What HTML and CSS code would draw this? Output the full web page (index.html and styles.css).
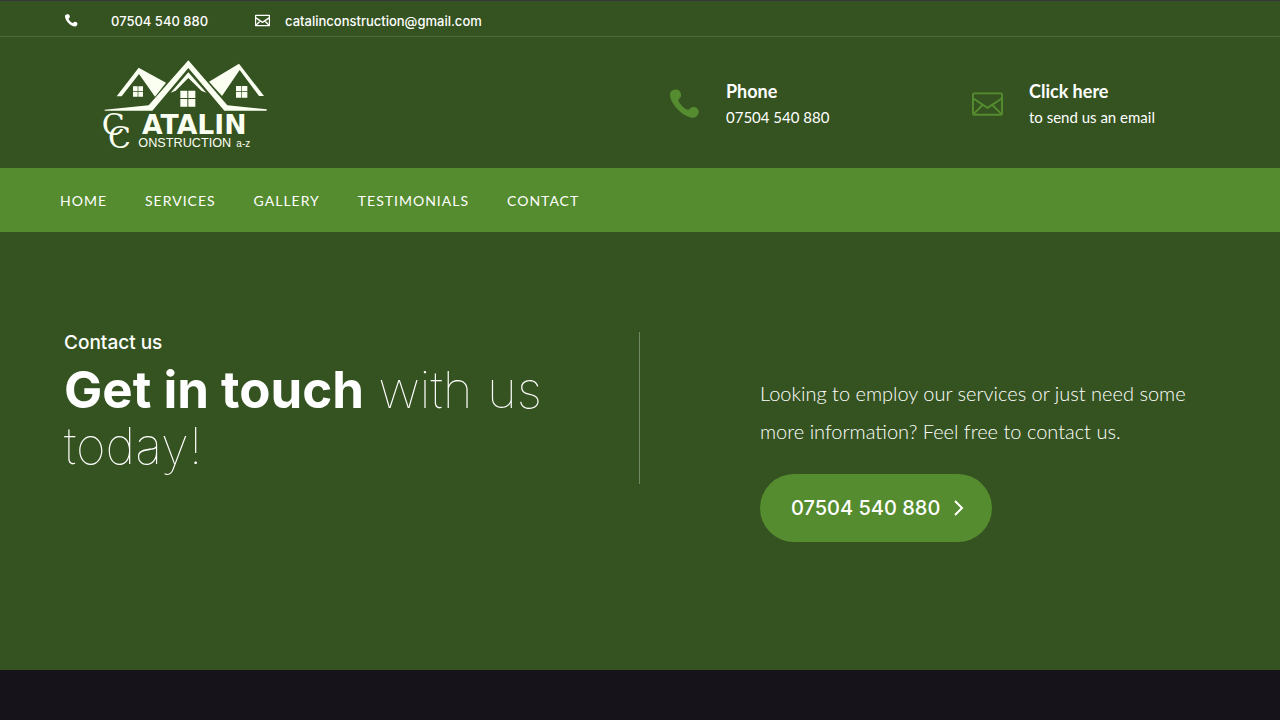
FILE: index.html
```html
<!DOCTYPE html>
<html lang="en">
<head>
  <meta charset="UTF-8">
  <meta name="viewport" content="width=device-width, initial-scale=1.0">
  <title>Contact - Catalin Construction</title>
  <link rel="stylesheet" href="styles.css">
</head>
<body>

<!-- Shared icons -->
<svg class="sprite" aria-hidden="true">
  <symbol id="icon-phone" viewBox="0 0 30 30">
    <path d="M1 2.500C2.500.6 6 0 8 .8c2.300 1 3.500 4.300 3 6.500-.4 1.700-2.400 2.300-2.600 3.700-.2 2.800 6.600 9.800 9.800 9.800 1.800 0 2.400-2.500 4.500-2.700 2.500-.3 5.700 1.400 6 4 .3 3.200-2.200 6.800-5.800 6.700C13.500 28.500 0 15 0 5.500 0 4.300.3 3.300 1 2.500z"/>
  </symbol>
  <symbol id="icon-mail" viewBox="0 0 32 24">
    <g fill="none" stroke="currentColor" stroke-linejoin="round">
      <rect x="1" y="1" width="30" height="22" rx="1"/>
      <path d="M1 6l15 10L31 6M2 22l9-9M30 22l-9-9"/>
    </g>
  </symbol>
</svg>

<div class="topbar">
  <a class="topbar-phone" href="tel:07504540880">
    <svg class="icon-small"><use href="#icon-phone"/></svg>
    <span>07504 540 880</span>
  </a>
  <a class="topbar-mail" href="mailto:catalinconstruction@gmail.com">
    <svg class="icon-small"><use href="#icon-mail"/></svg>
    <span>catalinconstruction@gmail.com</span>
  </a>
</div>

<header class="header">
  <a class="logo" href="#" aria-label="Catalin Construction a-z">
    <svg viewBox="0 0 570 330">
      <!-- Roofs -->
      <path d="M80 139L146 53 228 98 195 140 147 72 95 139z"/>
      <path d="M357 95L447 41 522 138H507L449 60 396 138z"/>
      <path d="M44 179L176 166 295 31 412 166 530 178V182H403L295 54 187 182H44z"/>
      <path d="M242 128L295 67 349 128 335 123 295 84 257 122z"/>
      <!-- Windows -->
      <path d="M271 122h21v22h-21zM295 122h21v22h-21zM271 147h21v23h-21zM295 147h21v23h-21z"/>
      <path d="M129 109h14v15h-14zM145 109h14v15h-14zM129 126h14v14h-14zM145 126h14v14h-14z"/>
      <path d="M438 108h16v16h-16zM456 108h16v16h-16zM438 126h16v17h-16zM456 126h16v17h-16z"/>
      <text class="logo-c" x="35" y="254">C</text>
      <text class="logo-c" x="54" y="293">C</text>
      <text class="logo-name" x="156" y="253">ATALIN</text>
      <text class="logo-sub" x="145" y="291">ONSTRUCTION</text>
      <text class="logo-az" x="439" y="291">a-z</text>
    </svg>
  </a>
  <div class="contacts">
    <a class="contact" href="tel:07504540880">
      <svg class="icon-phone"><use href="#icon-phone"/></svg>
      <span class="contact-text"><strong>Phone</strong><span>07504 540 880</span></span>
    </a>
    <a class="contact" href="mailto:catalinconstruction@gmail.com">
      <svg class="icon-mail"><use href="#icon-mail"/></svg>
      <span class="contact-text"><strong>Click here</strong><span>to send us an email</span></span>
    </a>
  </div>
</header>

<nav class="nav">
  <a href="#">HOME</a>
  <a href="#">SERVICES</a>
  <a href="#">GALLERY</a>
  <a href="#">TESTIMONIALS</a>
  <a href="#">CONTACT</a>
</nav>

<main class="hero">
  <div class="hero-title">
    <p>Contact us</p>
    <h1><strong>Get in touch</strong> with us today!</h1>
  </div>
  <div class="hero-text">
    <p>Looking to employ our services or just need some more information? Feel free to contact us.</p>
    <a class="btn" href="tel:07504540880">
      07504 540 880
      <svg class="chevron" viewBox="0 0 10 16"><path d="M1 1l7 7-7 7"/></svg>
    </a>
  </div>
</main>

</body>
</html>
```
FILE: styles.css
```css
/* General Reset */
* {
    margin: 0;
    padding: 0;
    box-sizing: border-box;
}

body {
    font-family: 'Lato', sans-serif;
    background-color: #16141a;
    color: #fff;
}

a {
    color: inherit;
    text-decoration: none;
}

svg {
    display: block;
    flex-shrink: 0;
    fill: currentColor;
}

.sprite {
    display: none;
}

/* Top bar */
.topbar {
    display: flex;
    align-items: center;
    gap: 47px;
    height: 37px;
    padding: 4px 64px 0;
    background-color: #355321;
    border-top: 1px solid #38373c;
    border-bottom: 1px solid #4d673b;
    font-family: 'Inter', sans-serif;
    font-size: 13px;
    font-weight: 500;
}

.topbar a {
    display: flex;
    align-items: center;
}

.topbar-phone {
    gap: 32px;
}

.topbar-mail {
    gap: 15px;
}

.icon-small {
    width: 15px;
    height: 13px;
    stroke-width: 3;
}

/* Header */
.header {
    display: grid;
    grid-template-columns: 1fr 546px;
    align-items: center;
    padding: 13px 64px 8px;
    background-color: #355321;
}

.logo {
    width: 190px;
    margin-left: 26px;
    color: #fbfff2;
}

.logo-c {
    font: 90px 'DejaVu Serif', serif;
}

.logo-name {
    font: bold 80px 'DejaVu Sans', sans-serif;
}

.logo-sub {
    font: 38px 'Liberation Sans', sans-serif;
}

.logo-az {
    font: 30px 'Liberation Sans', sans-serif;
}

.contacts {
    display: grid;
    grid-template-columns: 1fr 1fr;
    column-gap: 58px;
    padding-bottom: 2px;
}

.contact {
    display: flex;
    align-items: center;
    gap: 26px;
}

.contact > svg {
    color: #558c2f;
}

.icon-phone {
    width: 30px;
    height: 30px;
}

.icon-mail {
    width: 31px;
    height: 24px;
    stroke-width: 2;
}

.contact-text {
    display: flex;
    flex-direction: column;
    font-size: 15px;
    line-height: 26px;
}

.contact-text strong {
    font-size: 18px;
}

/* Navigation */
.nav {
    display: flex;
    align-items: center;
    gap: 38px;
    height: 64px;
    padding: 0 60px;
    background-color: #558c2f;
    font-size: 14px;
    letter-spacing: 1px;
}

/* Contact section */
.hero {
    display: grid;
    grid-template-columns: 1fr 1fr;
    align-items: start;
    padding: 100px 64px 128px;
    background-color: #355321;
}

.hero-title {
    padding-right: 64px;
    border-right: 1px solid #728764;
    font-family: 'Inter', sans-serif;
}

.hero-title p {
    margin-bottom: 8px;
    font-size: 19px;
    font-weight: 500;
    line-height: 22px;
}

.hero-title h1 {
    padding-bottom: 10px;
    font-size: 51px;
    font-weight: 100;
    line-height: 56px;
}

.hero-title strong {
    font-weight: 700;
}

.hero-text {
    padding: 42px 0 0 120px;
}

.hero-text p {
    margin-bottom: 24px;
    font-size: 20px;
    font-weight: 300;
    line-height: 38px;
}

.btn {
    display: inline-flex;
    align-items: center;
    gap: 14px;
    padding: 20px 28px 20px 31px;
    border-radius: 34px;
    background-color: #558c2f;
    font-family: 'Inter', sans-serif;
    font-size: 20px;
    font-weight: 500;
    line-height: 28px;
}

.chevron {
    width: 10px;
    height: 16px;
    fill: none;
    stroke: currentColor;
    stroke-width: 2;
}
```
